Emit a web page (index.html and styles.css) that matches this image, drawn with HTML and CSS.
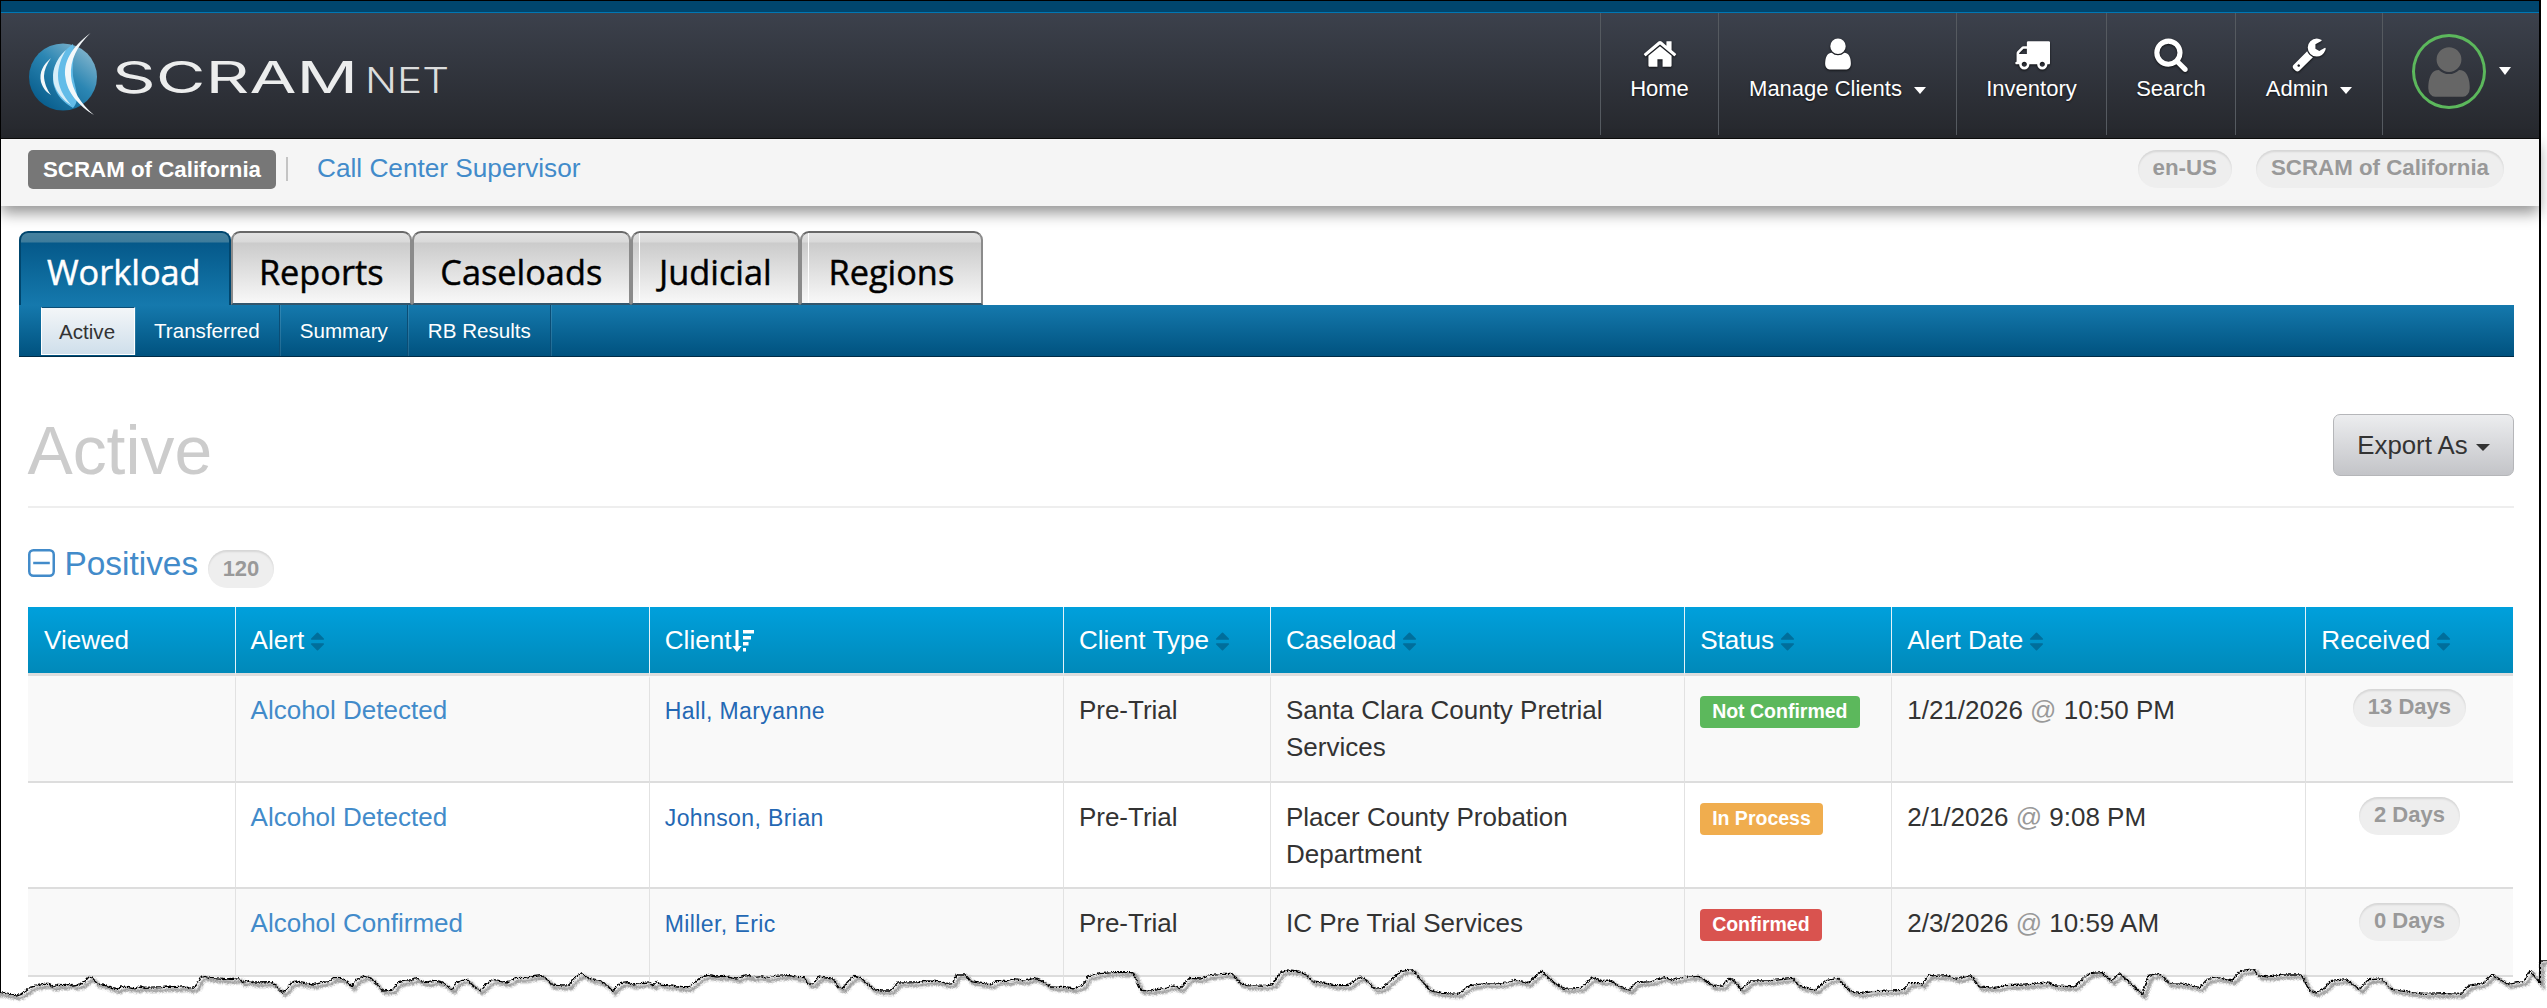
FILE: index.html
```html
<!DOCTYPE html>
<html lang="en">
<head>
<meta charset="utf-8">
<title>SCRAMnet - Active</title>
<link rel="stylesheet" href="styles.css">
</head>
<body>
<svg class="sprite" width="0" height="0" aria-hidden="true">
  <defs>
    <symbol id="i-home" viewBox="0 0 1792 1792"><path d="M1472 992v480q0 26-19 45t-45 19h-384v-384h-256v384h-384q-26 0-45-19t-19-45v-480q0-1 .5-3t.5-3l575-474 575 474q1 2 1 6zm223-69l-62 74q-8 9-21 11h-3q-13 0-21-7l-692-577-692 577q-12 8-24 7-13-2-21-11l-62-74q-8-10-7-23.5t11-21.5l719-599q32-26 76-26t76 26l244 204v-195q0-14 9-23t23-9h192q14 0 23 9t9 23v408l219 182q10 8 11 21.5t-7 23.5z"/></symbol>
    <symbol id="i-user" viewBox="0 0 1792 1792"><path d="M1536 1399q0 109-62.5 187t-150.5 78h-854q-88 0-150.5-78t-62.5-187q0-85 8.5-160.5t31.5-152 58.5-131 94-89 134.5-34.5q131 128 313 128t313-128q76 0 134.5 34.5t94 89 58.5 131 31.5 152 8.5 160.5zm-256-887q0 159-112.5 271.5t-271.5 112.5-271.5-112.5-112.5-271.5 112.5-271.5 271.5-112.5 271.5 112.5 112.5 271.5z"/></symbol>
    <symbol id="i-truck" viewBox="0 0 1792 1792"><path d="M640 1408q0-52-38-90t-90-38-90 38-38 90 38 90 90 38 90-38 38-90zm-384-512h384v-256h-158q-13 0-22 9l-195 195q-9 9-9 22v30zm1280 512q0-52-38-90t-90-38-90 38-38 90 38 90 90 38 90-38 38-90zm256-1088v1024q0 15-4 26.5t-13.5 18.5-16.5 11.5-23.5 6-22.5 2-25.5 0-22.5-.5q0 106-75 181t-181 75-181-75-75-181h-384q0 106-75 181t-181 75-181-75-75-181h-64q-3 0-22.5.5t-25.5 0-22.5-2-23.5-6-16.5-11.5-13.5-18.5-4-26.5q0-26 19-45t45-19v-320q0-8-.5-35t0-38 2.5-34.5 6.5-37 14-30.5 22.5-30l198-198q19-19 50.5-32t58.5-13h160v-192q0-26 19-45t45-19h1024q26 0 45 19t19 45z"/></symbol>
    <symbol id="i-search" viewBox="0 0 1792 1792"><path d="M1216 832q0-185-131.5-316.5t-316.5-131.5-316.5 131.5-131.5 316.5 131.5 316.5 316.5 131.5 316.5-131.5 131.5-316.5zm512 832q0 52-38 90t-90 38q-54 0-90-38l-343-342q-179 124-399 124-143 0-273.5-55.5t-225-150-150-225-55.5-273.5 55.5-273.5 150-225 225-150 273.5-55.5 273.5 55.5 225 150 150 225 55.5 273.5q0 220-124 399l343 343q37 37 37 90z"/></symbol>
    <symbol id="i-wrench" viewBox="0 0 1792 1792"><path d="M448 1472q0-26-19-45t-45-19-45 19-19 45 19 45 45 19 45-19 19-45zm644-420l-682 682q-37 37-90 37-52 0-91-37l-106-108q-38-36-38-90 0-53 38-91l681-681q39 98 114.5 173.5t173.5 114.5zm634-435q0 39-23 106-47 134-164.5 217.5t-258.5 83.5q-185 0-316.5-131.5t-131.5-316.5 131.5-316.5 316.5-131.5q58 0 121.5 16.5t107.5 46.5q16 11 16 28t-16 28l-293 169v224l193 107q5-3 79-48.5t135.5-81 70.5-35.5q15 0 23.5 10t8.5 25z"/></symbol>
    <symbol id="i-sort" viewBox="0 0 1792 1792"><path d="M1408 1088q0 26-19 45l-448 448q-19 19-45 19t-45-19l-448-448q-19-19-19-45t19-45 45-19h896q26 0 45 19t19 45zm0-384q0 26-19 45t-45 19h-896q-26 0-45-19t-19-45 19-45l448-448q19-19 45-19t45 19l448 448q19 19 19 45z"/></symbol>
    <symbol id="i-sort-desc" viewBox="0 0 24 24"><path d="M4.5 1h3v16h3.200L6 23 1.300 17h3.200zM12 1h11v3.600H12zM12 7h8v3.600h-8zM12 13h5.500v3.600H12zM12 19h3v3.600h-3z"/></symbol>
    <linearGradient id="globe-fill" x1="0.85" y1="0.1" x2="0.2" y2="0.9">
      <stop offset="0" stop-color="#7fb3cc"/>
      <stop offset="0.45" stop-color="#2b86b3"/>
      <stop offset="1" stop-color="#0a5f8e"/>
    </linearGradient>
    <path id="tear-line" class="tear-path" transform="scale(0.40816,0.33333)" d="M-20 95L0 95 12 98 25 102 38 105 50 100 62 90 75 78 88 75 105 70 118 70 128 78 140 73 155 74 168 70 178 75 195 72 207 62 217 49 225 52 235 67 248 72 258 74 272 82 285 86 295 78 315 80 330 84 342 78 355 82 395 80 405 78 430 80 450 77 465 85 478 78 490 50 500 46 512 52 545 55 555 57 585 53 592 65 605 60 620 66 665 65 680 82 690 96 702 84 710 68 725 63 745 68 765 72 785 65 805 62 815 52 835 53 850 65 860 78 872 58 890 46 905 50 920 68 935 90 960 88 975 65 990 60 1003 60 1018 53 1030 62 1045 66 1065 60 1080 65 1090 72 1105 87 1118 65 1130 58 1145 58 1155 72 1175 90 1190 70 1205 58 1225 62 1240 66 1262 52 1285 52 1300 48 1325 44 1340 57 1348 72 1375 75 1392 74 1405 55 1423 38 1440 53 1470 62 1485 72 1498 92 1518 68 1535 65 1550 72 1568 68 1588 66 1598 75 1608 64 1620 73 1643 75 1668 80 1686 80 1698 68 1716 50 1733 43 1753 48 1773 46 1803 54 1826 44 1843 50 1863 47 1878 52 1898 46 1933 44 1953 50 1968 50 1980 70 1993 68 2005 48 2038 54 2053 80 2063 84 2078 60 2093 46 2108 52 2138 86 2158 90 2180 90 2198 66 2248 65 2273 60 2298 62 2318 70 2333 68 2343 42 2363 42 2378 62 2408 68 2428 72 2443 60 2468 62 2483 56 2508 60 2533 52 2553 62 2573 78 2608 80 2631 84 2653 72 2663 48 2693 38 2728 35 2773 35 2783 60 2793 88 2818 90 2853 82 2873 75 2890 84 2913 52 2938 54 2963 44 2993 40 3018 40 3038 68 3053 74 3098 76 3118 70 3136 35 3151 30 3176 32 3196 40 3214 63 3246 67 3266 74 3301 74 3316 62 3331 49 3346 58 3366 85 3386 82 3406 60 3431 32 3458 26 3476 52 3501 88 3531 97 3571 100 3601 74 3636 68 3676 70 3711 58 3741 68 3776 32 3801 62 3831 85 3871 82 3901 50 3921 62 3946 60 3966 78 3991 88 4008 65 4046 62 4076 50 4096 58 4121 50 4161 46 4196 76 4221 75 4234 55 4246 58 4264 88 4288 60 4331 60 4391 52 4406 76 4446 88 4476 58 4501 52 4531 92 4556 98 4586 92 4636 90 4661 88 4676 68 4704 68 4707 72 4724 42 4742 46 4767 44 4792 55 4827 44 4847 78 4887 82 4912 74 4962 72 5017 66 5032 75 5082 78 5117 38 5147 35 5172 62 5192 38 5247 102 5262 46 5290 40 5312 68 5352 70 5387 82 5407 55 5432 50 5467 60 5487 32 5520 26 5532 45 5557 48 5592 42 5637 42 5657 90 5672 96 5697 80 5707 62 5747 56 5780 86 5802 56 5832 54 5857 85 5892 92 5937 100 5992 98 6027 100 6047 76 6082 68 6104 42 6142 70 6182 62 6197 30 6222 68 6222 0 6260 0 6260 320 -20 320Z"/>
    <filter id="rough" x="0" y="0" width="100%" height="100%" filterUnits="objectBoundingBox">
      <feTurbulence type="turbulence" baseFrequency="0.35" numOctaves="2" seed="4" result="n"/>
      <feDisplacementMap in="SourceGraphic" in2="n" scale="2" xChannelSelector="R" yChannelSelector="G"/>
    </filter>
    <filter id="soft"><feGaussianBlur stdDeviation="1.200"/></filter>
  </defs>
</svg>

<div class="window">
  <div class="topstrip"></div>
  <header class="navbar">
    <a class="logo" href="#" aria-label="SCRAMnet">
      <svg width="470" height="124" viewBox="0 13 470 124">
        <ellipse cx="62" cy="77" rx="34" ry="33.500" fill="url(#globe-fill)"/>
        <path class="swoosh-blue" d="M72 44C58 54 49 70 53 86 56 96 62 102 72 108 80 100 74 88 72 76 71 64 74 54 72 44Z"/>
        <path class="swoosh-white" d="M89.500 33C70 48 62 62 64.500 78 66 92 78 106 93 115 80 104 71 90 70 76 69 60 76 46 89.500 33Z"/>
        <path class="swoosh-pale" d="M65 50C54 60 50 72 53 84 56 93 62 100 70 105 62 96 57 86 57 76 57 67 60 58 65 50Z"/>
        <path class="swoosh-white" d="M50 58C42 65 38 72 40 82 42 88 45 92 50 95 46 90 43 82 43 76 43 70 46 64 50 58Z"/>
        <text class="logo-main" x="111" y="93" textLength="246" lengthAdjust="spacingAndGlyphs">SCRAM</text>
        <text class="logo-sub" x="364" y="93" textLength="84" lengthAdjust="spacingAndGlyphs">NET</text>
      </svg>
    </a>
    <nav class="mainnav">
      <a class="navitem nav-home" href="#"><svg class="navicon"><use href="#i-home"/></svg><span>Home</span></a>
      <a class="navitem nav-clients" href="#"><svg class="navicon"><use href="#i-user"/></svg><span>Manage Clients<i class="caret nav-caret"></i></span></a>
      <a class="navitem nav-inventory" href="#"><svg class="navicon"><use href="#i-truck"/></svg><span>Inventory</span></a>
      <a class="navitem nav-search" href="#"><svg class="navicon"><use href="#i-search"/></svg><span>Search</span></a>
      <a class="navitem nav-admin" href="#"><svg class="navicon"><use href="#i-wrench"/></svg><span>Admin<i class="caret nav-caret"></i></span></a>
      <a class="navitem useritem" href="#" aria-label="User menu">
        <span class="avatar"><svg class="avatar-person"><use href="#i-user"/></svg></span>
        <i class="caret avatar-caret"></i>
      </a>
    </nav>
  </header>

  <div class="contextbar">
    <div class="context-left">
      <span class="org-label">SCRAM of California</span>
      <span class="context-sep"></span>
      <a class="role-link" href="#">Call Center Supervisor</a>
    </div>
    <div class="context-right">
      <span class="pill pill-context">en-US</span>
      <span class="pill pill-context">SCRAM of California</span>
    </div>
  </div>

  <div class="tabs">
    <a class="tab tab-active" href="#">Workload</a>
    <a class="tab" href="#">Reports</a>
    <a class="tab" href="#">Caseloads</a>
    <a class="tab tab-notch" href="#">Judicial</a>
    <a class="tab tab-notch" href="#">Regions</a>
  </div>
  <div class="subtabs">
    <a class="subtab subtab-active" href="#">Active</a>
    <a class="subtab" href="#">Transferred</a>
    <a class="subtab" href="#">Summary</a>
    <a class="subtab" href="#">RB Results</a>
  </div>

  <main class="content">
    <div class="pagehead">
      <h1>Active</h1>
      <button class="export" type="button">Export As<i class="caret export-caret"></i></button>
    </div>

    <div class="sectionhead">
      <svg class="collapse" viewBox="0 0 26 27"><rect x="1.200" y="1.200" width="23.600" height="24.600" rx="4"/><path d="M5 13.500h16"/></svg>
      <a class="section-title" href="#">Positives</a>
      <span class="pill pill-count">120</span>
    </div>

    <table class="grid">
      <colgroup><col class="u1"><col class="u2"><col class="u2"><col class="u1"><col class="u2"><col class="u1"><col class="u2"><col class="u1"></colgroup>
      <thead>
        <tr>
          <th>Viewed</th>
          <th>Alert <svg class="sort"><use href="#i-sort"/></svg></th>
          <th>Client<svg class="sort-active"><use href="#i-sort-desc"/></svg></th>
          <th>Client Type <svg class="sort"><use href="#i-sort"/></svg></th>
          <th>Caseload <svg class="sort"><use href="#i-sort"/></svg></th>
          <th>Status <svg class="sort"><use href="#i-sort"/></svg></th>
          <th>Alert Date <svg class="sort"><use href="#i-sort"/></svg></th>
          <th>Received <svg class="sort"><use href="#i-sort"/></svg></th>
        </tr>
      </thead>
      <tbody>
        <tr class="row-one">
          <td></td>
          <td><a href="#">Alcohol Detected</a></td>
          <td><a class="client" href="#">Hall, Maryanne</a></td>
          <td>Pre-Trial</td>
          <td>Santa Clara County Pretrial Services</td>
          <td><span class="status status-ok">Not Confirmed</span></td>
          <td>1/21/2026 <span class="at">@</span> 10:50 PM</td>
          <td class="centered"><span class="pill pill-days">13 Days</span></td>
        </tr>
        <tr class="row-two">
          <td></td>
          <td><a href="#">Alcohol Detected</a></td>
          <td><a class="client" href="#">Johnson, Brian</a></td>
          <td>Pre-Trial</td>
          <td>Placer County Probation Department</td>
          <td><span class="status status-wait">In Process</span></td>
          <td>2/1/2026 <span class="at">@</span> 9:08 PM</td>
          <td class="centered"><span class="pill pill-days">2 Days</span></td>
        </tr>
        <tr class="row-three">
          <td></td>
          <td><a href="#">Alcohol Confirmed</a></td>
          <td><a class="client" href="#">Miller, Eric</a></td>
          <td>Pre-Trial</td>
          <td>IC Pre Trial Services</td>
          <td><span class="status status-bad">Confirmed</span></td>
          <td>2/3/2026 <span class="at">@</span> 10:59 AM</td>
          <td class="centered"><span class="pill pill-days">0 Days</span></td>
        </tr>
        <tr class="row-four"><td></td><td></td><td></td><td></td><td></td><td></td><td></td><td></td></tr>
      </tbody>
    </table>
  </main>
</div>

<svg class="tear" width="2547" height="48" viewBox="0 0 2547 48" aria-hidden="true">
  <g filter="url(#rough)">
    <use class="tear-fill" href="#tear-line"/>
    <use class="tear-shadow" href="#tear-line" transform="translate(3 3)" filter="url(#soft)"/>
    <use class="tear-edge" href="#tear-line"/>
  </g>
</svg>
</body>
</html>
```
FILE: styles.css
```css
* { box-sizing: border-box; }
html, body { margin: 0; padding: 0; }
body {
  position: relative;
  width: 2547px;
  height: 1008px;
  overflow: hidden;
  background: #fff;
  color: #333;
  font-family: "Liberation Sans", Arial, sans-serif;
  font-size: 26px;
}
a { color: #428bca; text-decoration: none; }
.sprite { position: absolute; }

.window {
  width: 2541px;
  height: 1008px;
  border-left: 1.5px solid #000;
  border-right: 2px solid #000;
  border-top: 1px solid #000;
  background: #fff;
}
.topstrip {
  height: 12px;
  background: #00466e;
  border-bottom: 1px solid #0077b3;
}

/* Top navigation */
.navbar {
  display: flex;
  justify-content: space-between;
  height: 126px;
  background: linear-gradient(#3c414c, #25272c);
  border-bottom: 1px solid #0c0c0c;
}
.logo { display: block; height: 124px; }
.logo svg { display: block; }
.swoosh-white { fill: #f4f8fa; }
.swoosh-pale { fill: #d7eef9; }
.swoosh-blue { fill: #63bce8; }
.logo-main {
  fill: #eceded;
  font-family: "Inter", "Liberation Sans", sans-serif;
  font-size: 44px;
  font-weight: 400;
}
.logo-sub {
  fill: #dcdddd;
  font-family: "Inter", "Liberation Sans", sans-serif;
  font-size: 35px;
  font-weight: 300;
}
.mainnav { display: flex; height: 122px; }
.navitem {
  display: flex;
  flex-direction: column;
  align-items: center;
  padding-top: 23px;
  border-left: 1px solid #555a60;
  color: #fff;
  font-size: 22px;
  line-height: 28px;
  text-shadow: 0 1px 2px rgba(0, 0, 0, .6);
  white-space: nowrap;
}
.nav-home { width: 118px; }
.nav-clients { width: 238px; }
.nav-inventory { width: 150px; }
.nav-search { width: 129px; }
.nav-admin { width: 147px; }
.navicon {
  width: 36px;
  height: 36px;
  margin-bottom: 3px;
  fill: #fff;
  filter: drop-shadow(0 1px 1px rgba(0, 0, 0, .7));
}
.caret {
  display: inline-block;
  width: 0;
  height: 0;
  border-style: solid;
  border-color: #fff transparent transparent;
}
.nav-caret {
  margin-left: 12px;
  border-width: 7px 6.500px 0;
  vertical-align: 2px;
}
.useritem {
  flex-direction: row;
  align-items: flex-start;
  width: 157px;
  padding: 21px 0 0 29px;
}
.avatar {
  display: flex;
  align-items: center;
  justify-content: center;
  width: 74px;
  height: 75px;
  border: 3px solid #5cb85c;
  border-radius: 50%;
  overflow: hidden;
}
.avatar-person { width: 58px; height: 58px; fill: #666; }
.avatar-caret {
  margin: 33px 0 0 13px;
  border-width: 8px 6.500px 0;
}

/* Context bar */
.contextbar {
  position: relative;
  display: flex;
  justify-content: space-between;
  height: 67px;
  padding: 11px 35px 0 27px;
  background: #f5f5f5;
  box-shadow: 0 7px 14px rgba(0, 0, 0, .42);
}
.context-left { display: flex; align-items: flex-start; }
.org-label {
  height: 39px;
  padding: 0 15px;
  border-radius: 5px;
  background: #777;
  color: #fff;
  font-size: 22.300px;
  font-weight: 700;
  line-height: 39px;
}
.context-sep {
  width: 2px;
  height: 24px;
  margin: 7px 29px 0 10px;
  background: #c4c4c4;
}
.role-link { font-size: 26.200px; line-height: 37px; }
.context-right { display: flex; align-items: flex-start; gap: 24px; }
.pill {
  display: inline-block;
  height: 38px;
  padding: 0 15px;
  border-radius: 19px;
  background: #eee;
  box-shadow: inset 0 2px 2px rgba(0, 0, 0, .1);
  color: #999;
  font-size: 22px;
  font-weight: 700;
  line-height: 36px;
}
.pill-context { font-size: 22.300px; }

/* Tabs */
.tabs {
  display: flex;
  height: 74px;
  margin: 25px 0 0 17.500px;
}
.tab {
  position: relative;
  padding: 18px 26.400px 0;
  border: 2px solid #8b8b8b;
  border-top-color: #686868;
  border-bottom: 2px solid #33566c;
  border-radius: 9px 9px 0 0;
  background: linear-gradient(#e2e2e2 0, #d9d9d9 9px, #cbcbcb 10px, #f8f8f8 100%);
  color: #000;
  font-family: "Open Sans", "Noto Sans", sans-serif;
  font-size: 34.300px;
  font-weight: 400;
  -webkit-text-stroke: .45px currentColor;
  line-height: 42px;
  white-space: nowrap;
}
.tab-active {
  width: 212px;
  border-color: #00466e;
  border-bottom: 0;
  background: linear-gradient(#46829f 0, #3e7c9c 9px, #05598a 10px, #1579ad 100%);
  color: #fff;
}
.tab-notch::before {
  content: "";
  position: absolute;
  top: 0;
  bottom: 0;
  left: 6px;
  width: 1px;
  background: #fff;
}
.subtabs {
  display: flex;
  height: 52px;
  margin: 0 25px 0 17.500px;
  padding-left: 22px;
  background: linear-gradient(#1579ad, #00527f);
  border-bottom: 1px solid #002c47;
}
.subtab {
  padding: 0 19.500px;
  border-right: 1px solid #0b4d75;
  box-shadow: 1px 0 0 rgba(255, 255, 255, .12);
  color: #fff;
  font-size: 20.600px;
  line-height: 52px;
}
.subtab-active {
  width: 94px;
  margin-top: 2px;
  height: 48px;
  padding: 0 17.500px;
  border: 1px solid #fff;
  border-top-color: #0b4d75;
  background: linear-gradient(#f3f6f8, #cfdfeb);
  color: #333;
  line-height: 48px;
}

/* Page content */
.content { padding: 57px 25px 0 26.500px; }
.pagehead {
  display: flex;
  justify-content: space-between;
  align-items: flex-start;
  height: 94px;
  border-bottom: 2px solid #eee;
}
.pagehead h1 {
  margin: 0;
  color: #ccc;
  font-size: 67.800px;
  font-weight: 400;
  line-height: 74px;
}
.export {
  display: block;
  width: 181px;
  height: 62px;
  padding: 0;
  border: 1.500px solid #b5b6b9;
  border-radius: 7px;
  background: linear-gradient(#ecedef, #c3c4c8);
  color: #333;
  font-family: inherit;
  font-size: 25.800px;
}
.export-caret {
  margin-left: 8px;
  border-width: 7.500px 7px 0;
  border-top-color: #333;
  vertical-align: 3px;
}
.sectionhead {
  display: flex;
  align-items: flex-start;
  height: 58px;
  margin-top: 41px;
}
.collapse {
  width: 27px;
  height: 28px;
  margin-right: 10px;
  fill: none;
  stroke: #428bca;
  stroke-width: 2.400;
}
.section-title { font-size: 33.400px; line-height: 30px; }
.pill-count {
  margin: 1px 0 0 10px;
  padding: 0 14.500px;
  line-height: 38px;
}

/* Table */
.grid {
  width: 2485px;
  border-spacing: 0;
  table-layout: fixed;
}
.u1 { width: 207px; }
.u2 { width: 414px; }
.grid th {
  height: 69px;
  padding: 0 15px;
  border-left: 1.500px solid #e4f2f8;
  border-bottom: 3px solid #ddd;
  background: linear-gradient(#00a0dc 0, #0089b9 66px, #0089b9 100%);
  color: #fff;
  font-size: 26.100px;
  font-weight: 400;
  text-align: left;
  white-space: nowrap;
}
.grid th:first-child { border-left: 0; padding-left: 16.500px; }
.sort {
  width: 23px;
  height: 23px;
  margin: 0 -5px;
  vertical-align: -4px;
  fill: #006e9b;
}
.sort-active {
  width: 24px;
  height: 24px;
  margin-left: 0;
  vertical-align: -4px;
  fill: #fff;
}
.grid td {
  padding: 14px 15px 13px;
  border-left: 1.500px solid #e2e2e2;
  border-top: 2px solid #ddd;
  line-height: 37px;
  vertical-align: top;
}
.grid td:first-child { border-left: 0; }
.row-one td { border-top-color: transparent; background: #f9f9f9; }
.row-one { height: 105px; }
.row-two { height: 106px; }
.row-three { height: 88px; }
.row-three td { background: #f9f9f9; }
.row-four { height: 60px; }
.row-two td, .row-three td { padding-top: 15.500px; }
.client { color: #2468b4; font-size: 23px; letter-spacing: .4px; }
.at { color: #999; }
.centered { text-align: center; }
.status {
  display: inline-block;
  height: 32px;
  margin-top: 4px;
  padding: 0 12px;
  border-radius: 4px;
  color: #fff;
  font-size: 19.500px;
  font-weight: 700;
  line-height: 31px;
  vertical-align: top;
}
.status-ok { background: #5cb85c; }
.status-wait { background: #f0ad4e; }
.status-bad { background: #d9534f; }
.pill-days { margin-top: -3px; vertical-align: top; }
.row-two .pill-days, .row-three .pill-days { margin-top: -2px; }

/* Torn paper edge */
.tear {
  position: absolute;
  left: 0;
  top: 960px;
}
.tear-path { vector-effect: non-scaling-stroke; }
.tear-fill { fill: #fff; stroke: none; }
.tear-shadow { fill: none; stroke: #444; stroke-width: 3px; opacity: .6; }
.tear-edge { fill: none; stroke: #000; stroke-width: 1.300px; }
```
